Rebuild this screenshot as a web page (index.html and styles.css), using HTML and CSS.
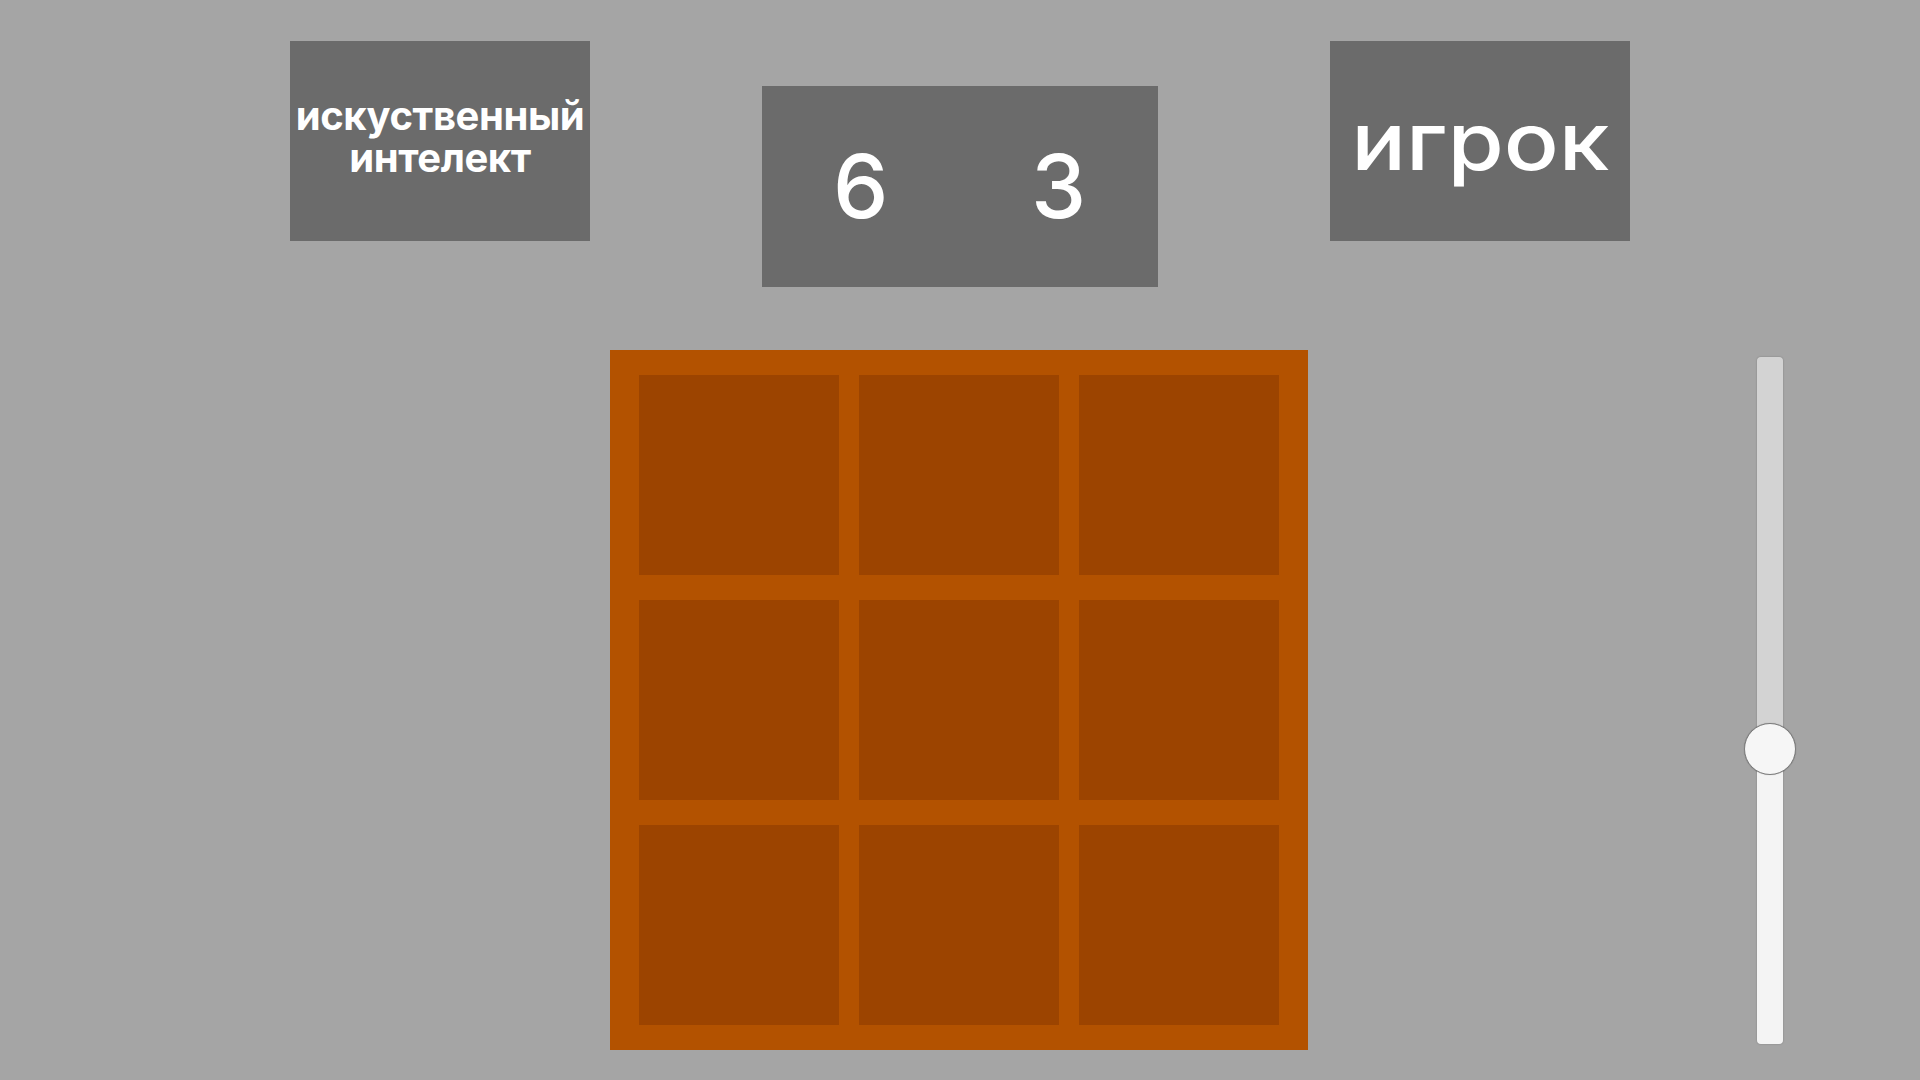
FILE: index.html
```html
<!DOCTYPE html>
<html lang="ru">
<head>
<meta charset="utf-8">
<title>Крестики-нолики</title>
<link rel="stylesheet" href="styles.css">
</head>
<body>
<div class="page">
  <header class="top">
    <div class="panel side ai"><span class="ai-text"><span class="line">искуственный</span><span class="line">интелект</span></span></div>
    <div class="panel score"><span class="num">6</span><span class="num">3</span></div>
    <div class="panel side player"><span class="player-text">игрок</span></div>
  </header>
  <main class="main">
    <div class="spacer"></div>
    <div class="board">
      <div class="cell"></div><div class="cell"></div><div class="cell"></div>
      <div class="cell"></div><div class="cell"></div><div class="cell"></div>
      <div class="cell"></div><div class="cell"></div><div class="cell"></div>
    </div>
    <div class="slider-col">
      <div class="slider">
        <div class="thumb"></div>
      </div>
    </div>
  </main>
</div>
</body>
</html>
```
FILE: styles.css
```css
html, body {
  margin: 0;
  padding: 0;
}
body {
  background: #a5a5a5;
  font-family: Inter, "Open Sans", "DejaVu Sans", sans-serif;
  color: #ffffff;
  width: 1920px;
  height: 1080px;
  overflow: hidden;
}
.page {
  width: 1920px;
  height: 1080px;
}
.top {
  display: flex;
  justify-content: center;
  align-items: flex-start;
  gap: 172px;
  padding-top: 41px;
}
.panel {
  background: #6b6b6b;
  display: flex;
  align-items: center;
  justify-content: center;
  text-align: center;
}
.side {
  width: 300px;
  height: 200px;
}
.ai {
  padding-bottom: 8px;
  box-sizing: border-box;
}
.ai-text {
  display: flex;
  flex-direction: column;
  align-items: center;
  font-weight: 700;
  font-size: 40px;
  letter-spacing: -0.4px;
}
.line {
  display: block;
  line-height: 42px;
}
.player-text {
  font-weight: 500;
  font-size: 80px;
  line-height: 1.2;
  display: inline-block;
  transform: scaleX(1.14);
}
.score {
  width: 396px;
  height: 201px;
  margin-top: 45px;
  gap: 150px;
  padding-right: 8px;
  box-sizing: border-box;
}
.num {
  font-size: 88px;
  font-weight: 500;
  line-height: 1.2;
  width: 48px;
  text-align: center;
}
.main {
  display: grid;
  grid-template-columns: 610px 698px 1fr;
  margin-top: 63px;
}
.board {
  background: #b35200;
  padding: 25px 29px;
  display: grid;
  grid-template-columns: repeat(3, 200px);
  grid-template-rows: repeat(3, 200px);
  column-gap: 20px;
  row-gap: 25px;
}
.cell {
  background: #9c4400;
}
.slider-col {
  display: flex;
  justify-content: flex-end;
  align-items: flex-start;
  padding-right: 137px;
  padding-top: 7px;
}
.slider {
  position: relative;
  width: 26px;
  height: 687px;
  border-radius: 4px;
  background: linear-gradient(to bottom, #d3d3d3 0, #d3d3d3 57%, #f4f4f4 57%, #f4f4f4 100%);
  box-shadow: 0 0 1.5px rgba(0, 0, 0, 0.35);
}
.thumb {
  position: absolute;
  left: 50%;
  top: 57%;
  width: 50px;
  height: 50px;
  transform: translate(-50%, -50%);
  border-radius: 50%;
  background: #f6f6f6;
  border: 1.5px solid #7c7c7c;
  box-shadow: 0 0 1px rgba(0, 0, 0, 0.3);
}
```
